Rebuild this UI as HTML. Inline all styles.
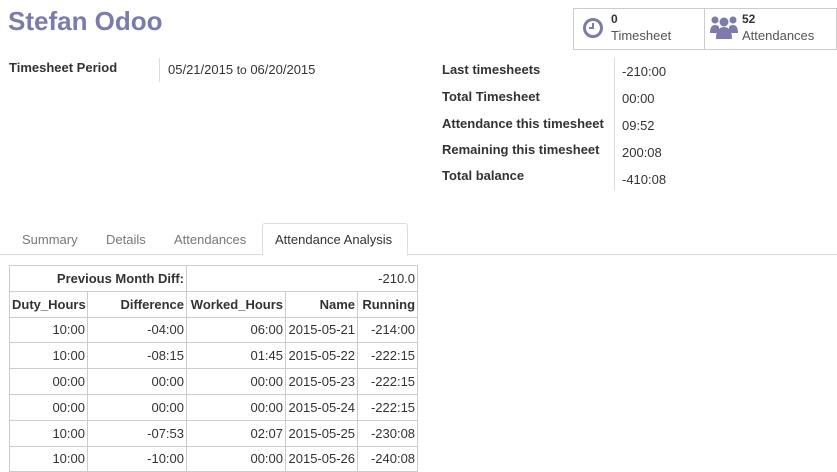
<html><head><style>
body{margin:0;width:837px;height:459px;overflow:hidden;background:#fff;font-family:"Liberation Sans",sans-serif;font-size:13px;color:#333;position:relative}
.a{position:absolute}
h1{position:absolute;left:8px;top:6px;margin:0;font-size:26px;color:#7c7bad;font-weight:bold}
.b{font-weight:bold}
.stat{position:absolute;top:8px;height:40px;border:1px solid #ccc;background:#fff}
table{position:absolute;left:9px;top:265px;border-collapse:collapse;font-size:13px;table-layout:fixed;width:408px}
tr{height:25.8px}
td,th{border:1px solid #ccc;padding:0 2px;text-align:right;white-space:nowrap;overflow:hidden}
th{font-weight:bold}
</style></head><body>
<h1>Stefan Odoo</h1>
<div class="stat" style="left:573px;width:131px"></div>
<div class="stat" style="left:704px;width:131px"></div>
<svg class="a" style="left:582px;top:17px" width="22" height="22" viewBox="0 0 22 22"><circle cx="11" cy="11" r="8.5" fill="none" stroke="#7c7bad" stroke-width="3"/><path d="M11 6v5h-4" fill="none" stroke="#7c7bad" stroke-width="2"/></svg>
<div class="a b" style="left:611px;top:12px;font-size:12px">0</div>
<div class="a" style="left:611px;top:28px;font-size:13px;color:#555">Timesheet</div>
<svg class="a" style="left:710px;top:15px" width="28" height="26" viewBox="0 0 28 26"><g fill="#7c7bad"><circle cx="5" cy="5" r="3.5"/><circle cx="23" cy="5" r="3.5"/><circle cx="14" cy="7" r="4.5"/><path d="M0 18q0-8 5-8q3 0 4 2v6z"/><path d="M28 18q0-8-5-8q-3 0-4 2v6z"/><path d="M6 24q0-12 8-12q8 0 8 12z"/></g></svg>
<div class="a b" style="left:742px;top:12px;font-size:12px">52</div>
<div class="a" style="left:742px;top:28px;font-size:13px;color:#555">Attendances</div>
<div class="a b" style="left:9px;top:60px">Timesheet Period</div>
<div class="a" style="left:159px;top:58px;width:1px;height:24px;background:#ddd"></div>
<div class="a" style="left:168px;top:62px">05/21/2015 <span style="font-size:12px">to</span> 06/20/2015</div>
<div class="a" style="left:614px;top:58px;width:1px;height:132px;background:#ddd"></div>
<div class="a b" style="left:442px;top:62px">Last timesheets</div><div class="a" style="left:622px;top:64px">-210:00</div>
<div class="a b" style="left:442px;top:89px">Total Timesheet</div><div class="a" style="left:622px;top:91px">00:00</div>
<div class="a b" style="left:442px;top:116px">Attendance this timesheet</div><div class="a" style="left:622px;top:118px">09:52</div>
<div class="a b" style="left:442px;top:142px">Remaining this timesheet</div><div class="a" style="left:622px;top:145px">200:08</div>
<div class="a b" style="left:442px;top:168px">Total balance</div><div class="a" style="left:622px;top:172px">-410:08</div>
<div class="a" style="left:0;top:254px;width:837px;height:1px;background:#ddd"></div>
<div class="a" style="left:22px;top:232px;color:#777">Summary</div>
<div class="a" style="left:106px;top:232px;color:#777">Details</div>
<div class="a" style="left:174px;top:232px;color:#777">Attendances</div>
<div class="a" style="left:262px;top:223px;width:144px;height:31px;border:1px solid #ddd;border-bottom:1px solid #fff;background:#fff;border-radius:3px 3px 0 0"></div>
<div class="a" style="left:275px;top:232px;color:#333">Attendance Analysis</div>
<table>
<colgroup><col style="width:78px"><col style="width:99px"><col style="width:99px"><col style="width:72px"><col style="width:60px"></colgroup>
<tr><th colspan="2">Previous Month Diff:</th><td colspan="3">-210.0</td></tr>
<tr><th>Duty_Hours</th><th>Difference</th><th>Worked_Hours</th><th>Name</th><th>Running</th></tr>
<tr><td>10:00</td><td>-04:00</td><td>06:00</td><td>2015-05-21</td><td>-214:00</td></tr>
<tr><td>10:00</td><td>-08:15</td><td>01:45</td><td>2015-05-22</td><td>-222:15</td></tr>
<tr><td>00:00</td><td>00:00</td><td>00:00</td><td>2015-05-23</td><td>-222:15</td></tr>
<tr><td>00:00</td><td>00:00</td><td>00:00</td><td>2015-05-24</td><td>-222:15</td></tr>
<tr><td>10:00</td><td>-07:53</td><td>02:07</td><td>2015-05-25</td><td>-230:08</td></tr>
<tr><td>10:00</td><td>-10:00</td><td>00:00</td><td>2015-05-26</td><td>-240:08</td></tr>
</table>
</body></html>
